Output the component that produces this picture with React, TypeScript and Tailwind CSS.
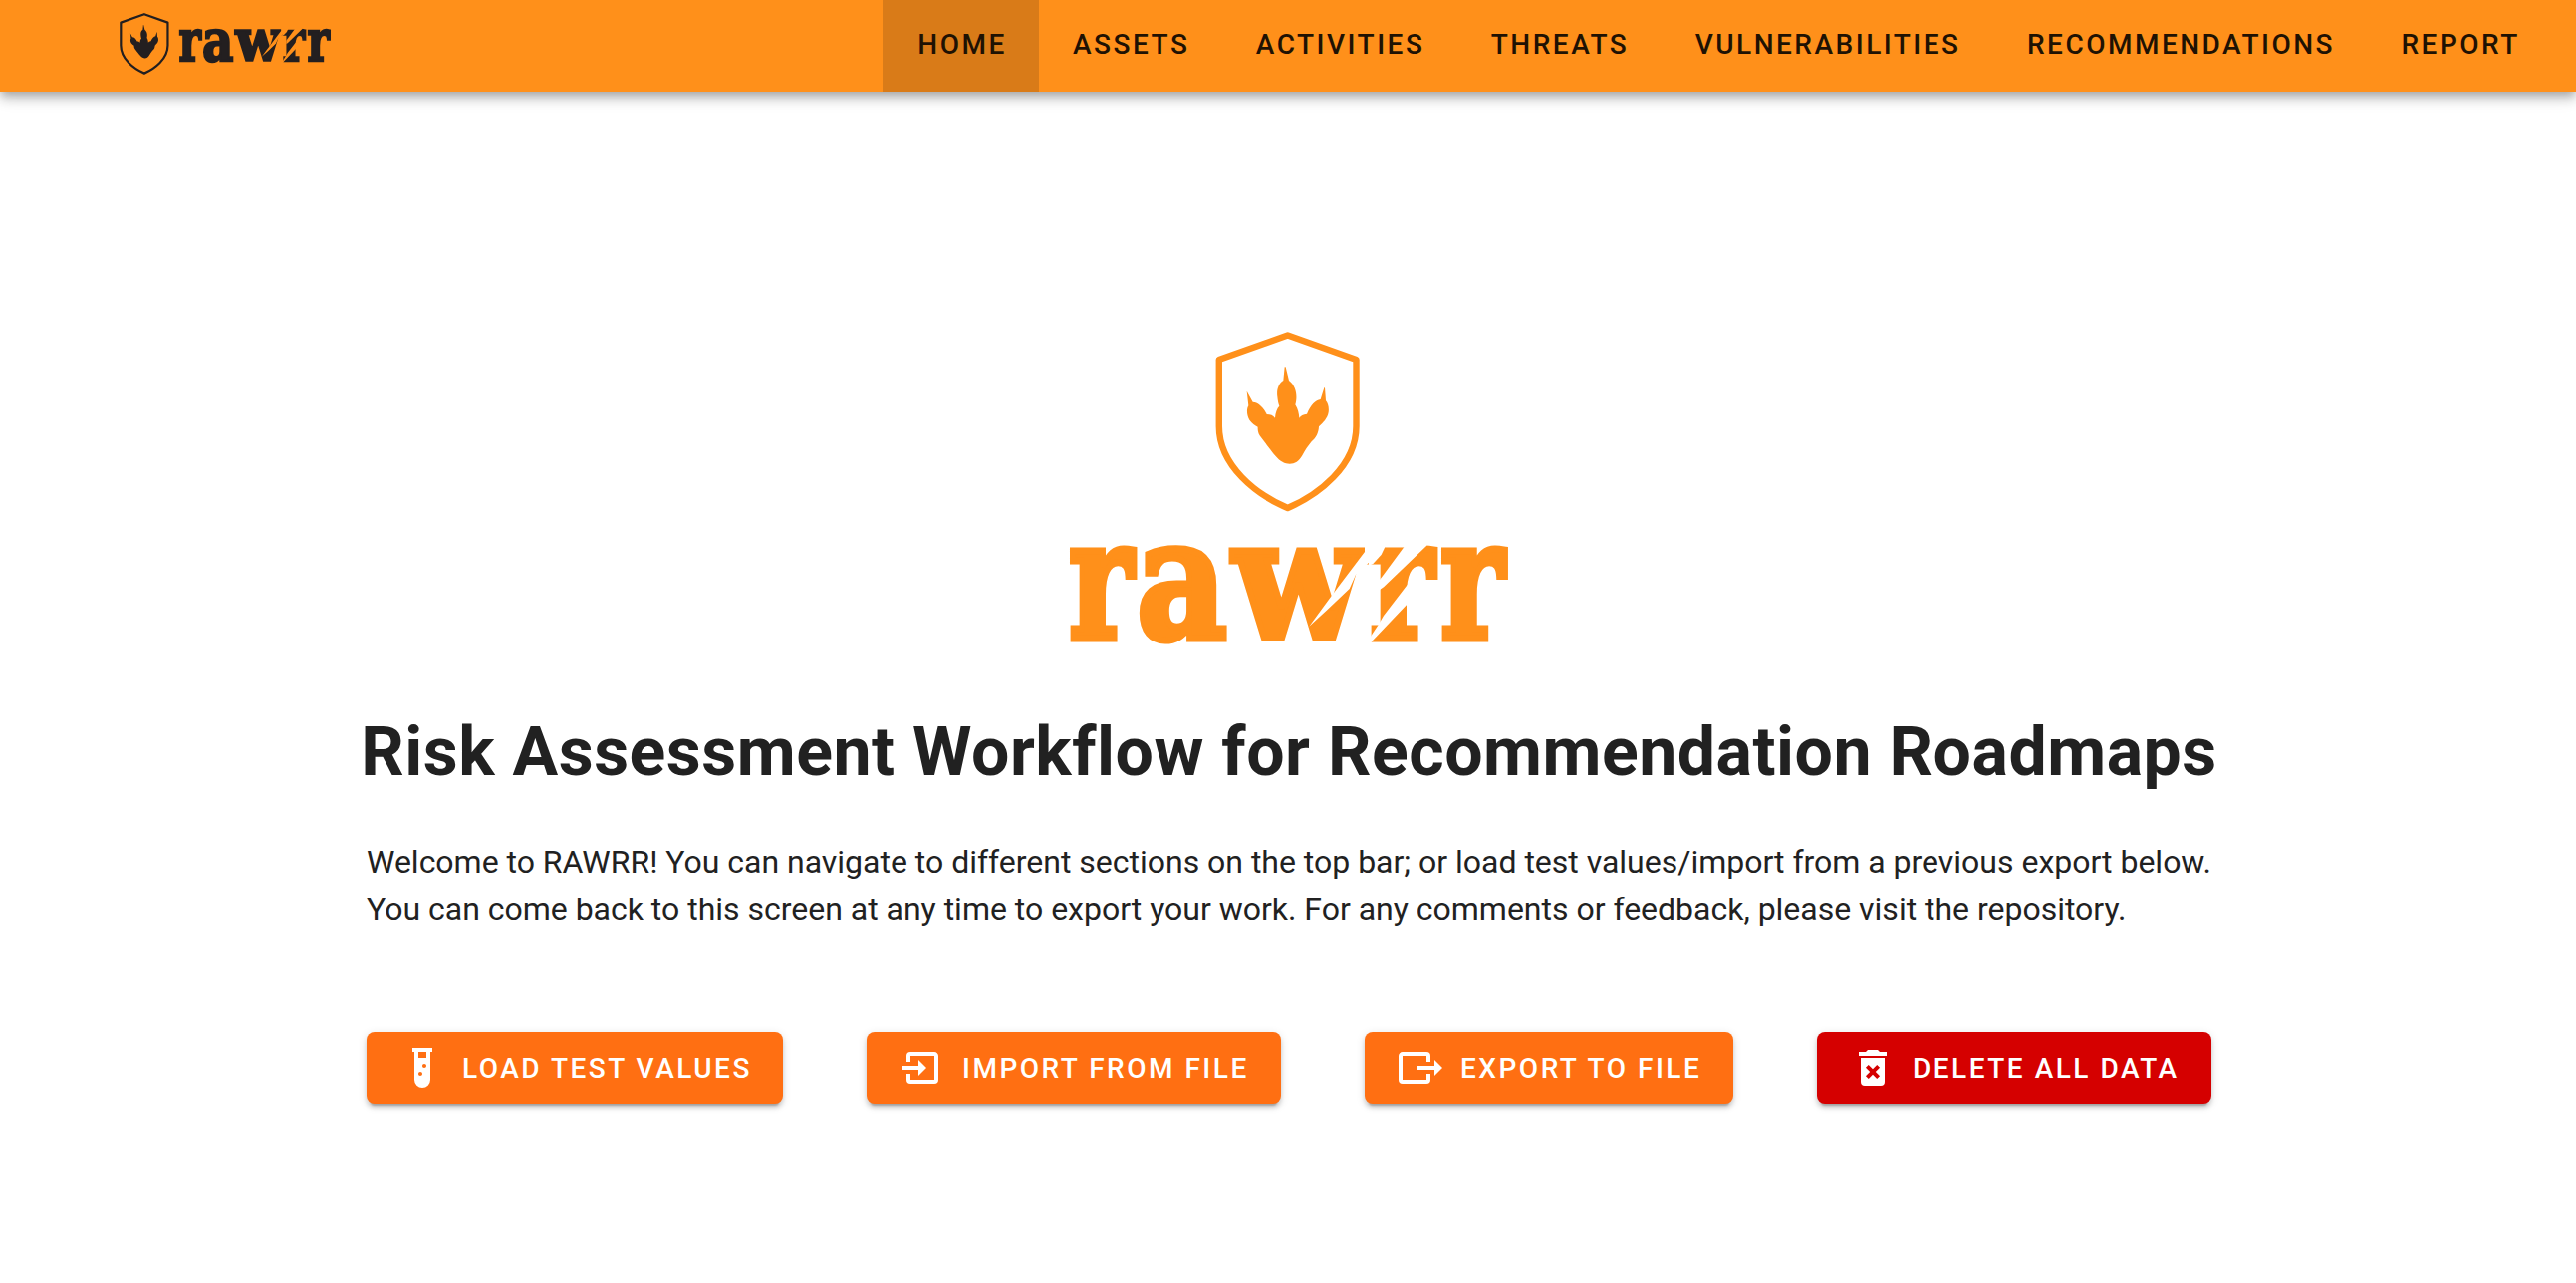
import React from 'react';

const tabs = ['Home', 'Assets', 'Activities', 'Threats', 'Vulnerabilities', 'Recommendations', 'Report'];

const icons = {
  tube: 'M7,2V4H8V18A4,4 0 0,0 12,22A4,4 0 0,0 16,18V4H17V2H7M11,16C10.4,16 10,15.6 10,15C10,14.4 10.4,14 11,14C11.6,14 12,14.4 12,15C12,15.6 11.6,16 11,16M13,12C12.4,12 12,11.6 12,11C12,10.4 12.4,10 13,10C13.6,10 14,10.4 14,11C14,11.6 13.6,12 13,12M14,7H10V4H14V7Z',
  load: 'M14,12L10,8V11H2V13H10V16M20,18V6C20,4.89 19.1,4 18,4H6A2,2 0 0,0 4,6V9H6V6H18V18H6V15H4V18A2,2 0 0,0 6,20H18A2,2 0 0,0 20,18Z',
  save: 'M23,12L19,8V11H10V13H19V16M1,18V6C1,4.89 1.9,4 3,4H15A2,2 0 0,1 17,6V9H15V6H3V18H15V15H17V18A2,2 0 0,1 15,20H3A2,2 0 0,1 1,18Z',
  trash:
    'M6,19A2,2 0 0,0 8,21H16A2,2 0 0,0 18,19V7H6V19M8.46,11.88L9.87,10.47L12,12.59L14.12,10.47L15.53,11.88L13.41,14L15.53,16.12L14.12,17.53L12,15.41L9.88,17.53L8.47,16.12L10.59,14L8.46,11.88M15.5,4L14.5,3H9.5L8.5,4H5V6H19V4H15.5Z',
};

const actions = [
  { label: 'Load test values', icon: icons.tube, style: 'w-[418px] bg-[#ff6f12]' },
  { label: 'Import from file', icon: icons.load, style: 'w-[416px] bg-[#ff6f12]' },
  { label: 'Export to file', icon: icons.save, style: 'w-[370px] bg-[#ff6f12]' },
  { label: 'Delete all data', icon: icons.trash, style: 'w-[396px] bg-[#d50000]' },
];

function Shield({ className }: { className: string }) {
  return (
    <svg viewBox="20 13 146 181" className={className} fill="none">
      <path
        d="M92.7 16.5L23.8 41V108C23.8 148 62 177 92.7 190C123 177 161.5 148 161.5 108V41Z"
        stroke="currentColor"
        strokeWidth="6.4"
        strokeLinejoin="round"
      />
      <path
        transform="scale(0.33333)"
        fill="currentColor"
        d="M269 145L265 186C250 195 244 215 247 235Q249 255 253 263C246 270 241 283 240 299C234 291 226 288 215 288C207 270 190 251 173 251L155 218L160 262C154 272 154 290 163 305C170 315 180 322 188 326C187 338 190 350 200 360C215 380 230 400 242 414C255 430 270 437 284 437C300 437 312 430 322 412C330 397 340 382 350 370C364 358 371 345 372 325C385 313 398 300 401 282C403 268 400 255 393 247L390 208L388 208L377 243C362 246 348 258 336 287C325 288 317 293 313 299C312 285 309 272 301 259C307 240 307 205 282 186L272 145Z"
      />
    </svg>
  );
}

const letters = [
  { ch: 'r', x: 4, sx: 0.73 },
  { ch: 'a', x: 72, sx: 0.835 },
  { ch: 'w', x: 169, sx: 0.9 },
  { ch: 'r', x: 306, sx: 0.73 },
  { ch: 'r', x: 377, sx: 0.725 },
];

/* The name, with claw marks torn out of the third and fourth letters. */
function Wordmark({ id, className }: { id: string; className: string }) {
  return (
    <svg viewBox="0 0 448 112" className={className}>
      <mask id={id} maskUnits="userSpaceOnUse" x="0" y="0" width="448" height="112">
        <rect width="448" height="112" fill="white" />
        <polygon points="301,3 301,14 270,55 259,70 245.3,88.7 263.3,72.3 285.7,51 292,37 307,23 307,3" />
        <polygon points="341,8.3 320,36.7 316,42 316,52 320,49.3 363.3,7.7 363,0 343,0" />
        <polygon points="305,5 321,5 321,9.7 317.7,16.7 309.3,26 305,28" />
        <polygon points="345.3,45 320,78 314.3,87.7 307.3,98.3 305,107 307.3,104.7 345.3,64.7 352,57 352,42" />
      </mask>
      <g
        mask={`url(#${id})`}
        fill="currentColor"
        stroke="currentColor"
        strokeWidth="7"
        strokeLinejoin="miter"
        strokeMiterlimit="3"
        className="font-['DejaVu_Serif',serif] text-[168px] font-bold"
      >
        {letters.map((l, i) => (
          <text key={i} transform={`translate(${l.x} 101.2) scale(${l.sx} 1)`}>
            {l.ch}
          </text>
        ))}
      </g>
    </svg>
  );
}

export default function App() {
  return (
    <div className="flex h-[1288px] w-full flex-col bg-white font-[Roboto,sans-serif] text-[#212121]">
      <header className="relative flex h-[92px] shrink-0 items-stretch justify-between bg-[#ff901a] pr-[23px] pl-[120px] shadow-[0_4px_8px_-2px_rgba(0,0,0,0.2),0_8px_10px_0_rgba(0,0,0,0.14),0_2px_20px_0_rgba(0,0,0,0.12)]">
        <div className="flex items-start pt-[13px] text-[#231f20]">
          <Shield className="h-[62px] w-[50px]" />
          <Wordmark id="tear-small" className="mt-[13px] ml-[8px] h-[39px] w-[155px] overflow-visible" />
        </div>
        <nav className="flex">
          {tabs.map((t, i) => (
            <a
              key={t}
              className={
                i === 0
                  ? 'mr-[1px] flex items-center bg-[#d97b18] pr-[32px] pb-[3px] pl-[35px] text-[28px] font-medium tracking-[2.5px] text-[#1f1203] uppercase'
                  : 'flex items-center px-[33.2px] pb-[3px] text-[28px] font-medium tracking-[2.5px] text-[#1f1203] uppercase'
              }
            >
              {t}
            </a>
          ))}
        </nav>
      </header>

      <main className="flex flex-col items-center">
        <div className="flex flex-col items-center pt-[241px] text-[#ff901a]">
          <Shield className="h-[181px] w-[146px]" />
          <Wordmark id="tear-large" className="mt-[26px] h-[112px] w-[448px] overflow-visible" />
        </div>
        <h1 className="mt-[58px] ml-[2px] text-[68px] leading-[90px] font-bold tracking-[0.52px] whitespace-nowrap">
          Risk Assessment Workflow for Recommendation Roadmaps
        </h1>
        <div className="mt-[41px] ml-[2px] w-[1852px]">
          <p className="text-[32px] leading-[48px] tracking-[-0.01px] whitespace-nowrap">
            Welcome to RAWRR! You can navigate to different sections on the top bar; or load test values/import from a previous export below.
            <br />
            You can come back to this screen at any time to export your work. For any comments or feedback, please visit the repository.
          </p>
          <div className="mt-[99px] flex justify-between">
            {actions.map((a) => (
              <button
                key={a.label}
                className={`${a.style} flex h-[72px] items-center rounded-[8px] pl-[32px] text-[28px] font-medium tracking-[2.5px] whitespace-nowrap text-white uppercase shadow-[0_6px_2px_-4px_rgba(0,0,0,0.2),0_4px_4px_0_rgba(0,0,0,0.14),0_2px_10px_0_rgba(0,0,0,0.12)]`}
              >
                <svg viewBox="0 0 24 24" className="mr-[16px] size-[48px] shrink-0" fill="currentColor">
                  <path d={a.icon} />
                </svg>
                <span className="pt-[2px]">{a.label}</span>
              </button>
            ))}
          </div>
        </div>
      </main>
    </div>
  );
}
